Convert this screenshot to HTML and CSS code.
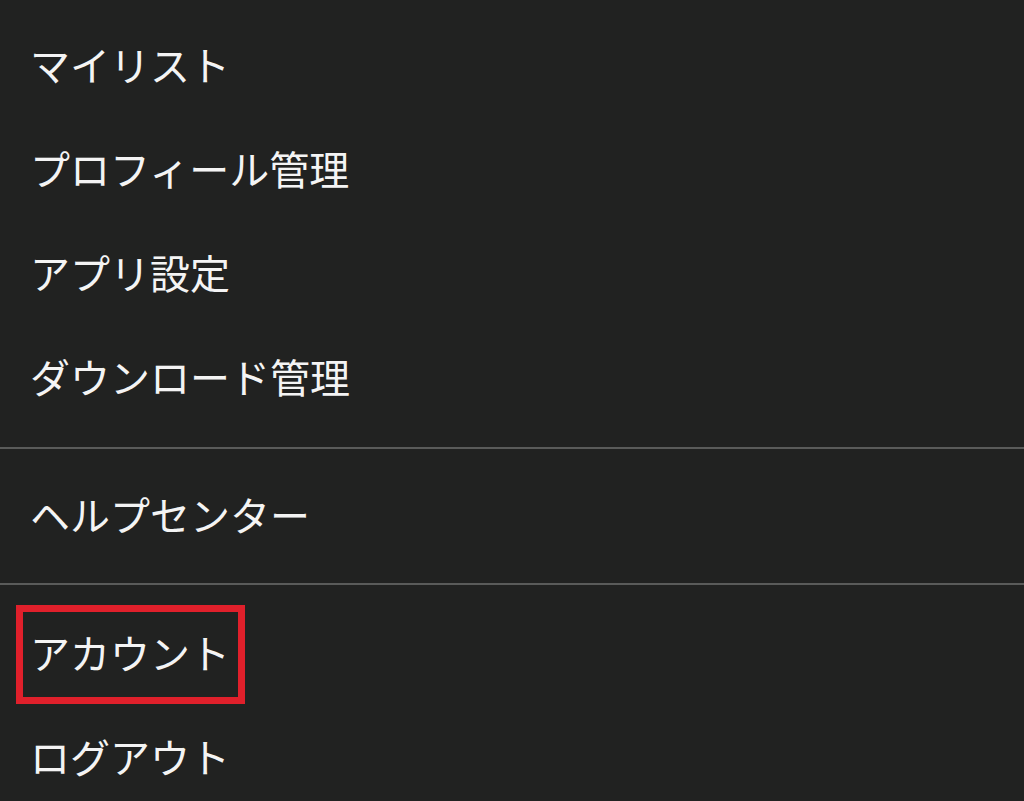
FILE: index.html
```html
<!DOCTYPE html>
<html lang="ja">
<head>
<meta charset="utf-8">
<title>メニュー</title>
<link rel="stylesheet" href="styles.css">
</head>
<body>
<nav class="menu">
  <ul class="group group-first">
    <li class="item">マイリスト</li>
    <li class="item">プロフィール管理</li>
    <li class="item">アプリ設定</li>
    <li class="item">ダウンロード管理</li>
  </ul>
  <ul class="group group-mid">
    <li class="item">ヘルプセンター</li>
  </ul>
  <ul class="group group-last">
    <li class="item item-marked">アカウント</li>
    <li class="item">ログアウト</li>
  </ul>
</nav>
</body>
</html>
```
FILE: styles.css
```css
html, body {
  margin: 0;
  padding: 0;
  background: #212221;
  height: 100%;
  overflow: hidden;
}

.menu {
  font-family: "Noto Sans CJK JP", "Noto Sans", sans-serif;
  color: #f4f4f4;
  font-size: 40px;
  font-weight: 400;
}

.group {
  list-style: none;
  margin: 0;
  padding: 0;
  border-bottom: 2px solid #5a5b5a;
}

.group-last {
  border-bottom: none;
}

.group-first {
  padding: 15px 0 16px;
}

.group-mid {
  padding: 16px 0 14px;
}

.group-last {
  padding: 18px 0 0;
}

.item {
  box-sizing: border-box;
  height: 104px;
  display: flex;
  align-items: center;
  padding-left: 30px;
  padding-bottom: 6px;
  position: relative;
  line-height: 1;
}

.item-marked::after {
  content: "";
  position: absolute;
  left: 16px;
  top: 2px;
  width: 229px;
  height: 99px;
  box-sizing: border-box;
  border: 7px solid #e0202b;
}
```
